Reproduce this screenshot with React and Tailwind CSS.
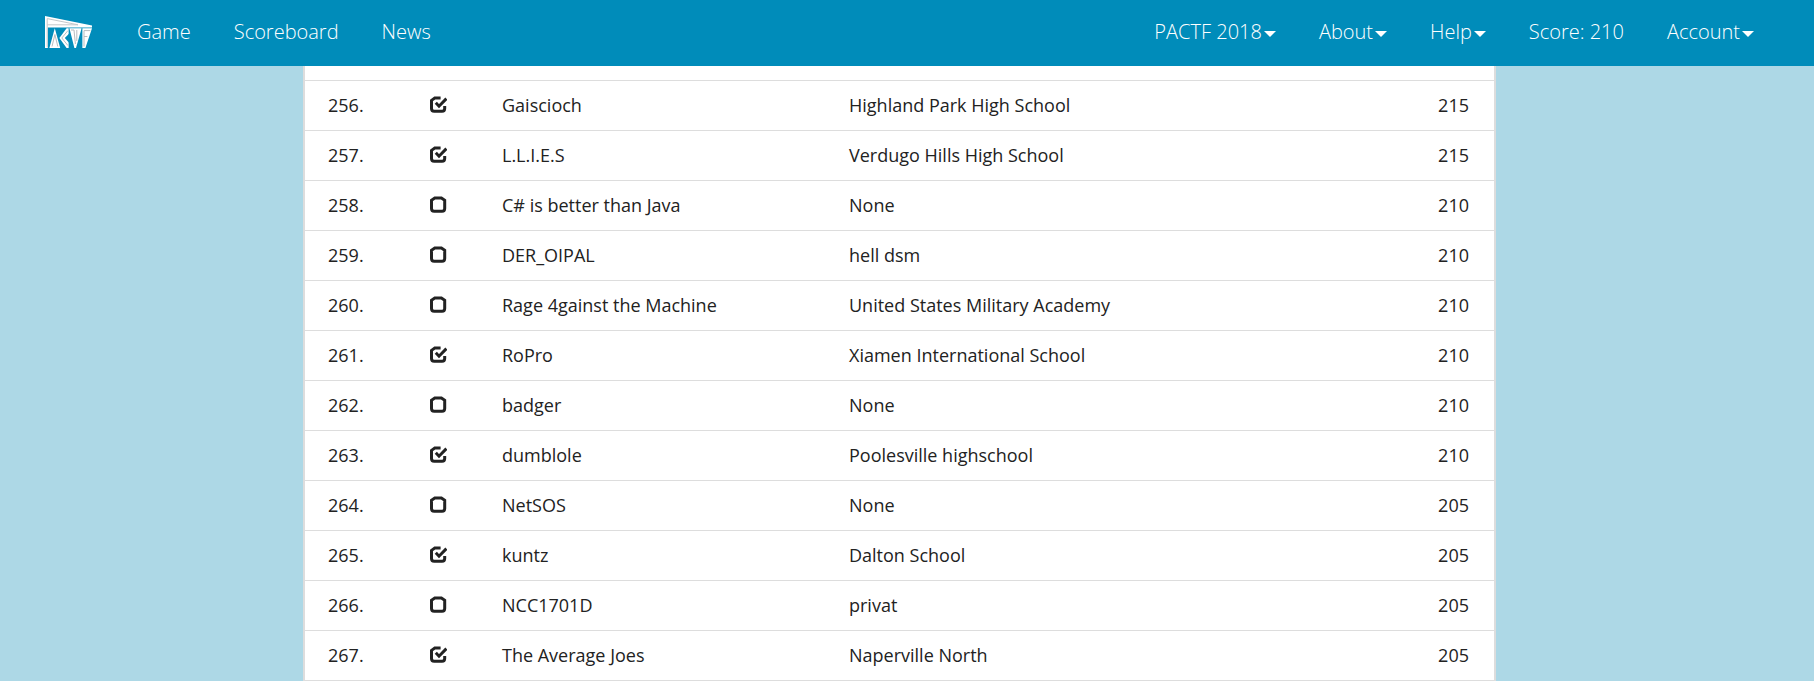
const teams = [
  [256, true, 'Gaiscioch', 'Highland Park High School', 215],
  [257, true, 'L.L.I.E.S', 'Verdugo Hills High School', 215],
  [258, false, 'C# is better than Java', 'None', 210],
  [259, false, 'DER_OIPAL', 'hell dsm', 210],
  [260, false, 'Rage 4gainst the Machine', 'United States Military Academy', 210],
  [261, true, 'RoPro', 'Xiamen International School', 210],
  [262, false, 'badger', 'None', 210],
  [263, true, 'dumblole', 'Poolesville highschool', 210],
  [264, false, 'NetSOS', 'None', 205],
  [265, true, 'kuntz', 'Dalton School', 205],
  [266, false, 'NCC1701D', 'privat', 205],
  [267, true, 'The Average Joes', 'Naperville North', 205],
];

function Logo() {
  return (
    <svg width="48" height="32" viewBox="0 0 48 32" aria-hidden="true">
      <path d="M0 0 L47 9.4 V11.6 H2.8 V32 H0 Z" fill="#fff" />
      <path d="M2.2 2.6 L33 8.8 H2.2 M2.2 2.6 V31" fill="none" stroke="#c4c8ca" strokeWidth="1" />
      <path d="M9.8 12.2 L15.2 32 H4.4 Z" fill="#fff" />
      <path d="M21.6 12.2 H23.6 V32 H21.6 L14.4 22 Z" fill="#fff" />
      <path d="M24.4 12.2 H36.6 L31 32 H29.4 Z" fill="#fff" />
      <path d="M37.4 12.2 H47 L40.4 32 H37.4 Z" fill="#fff" />
      <path d="M24.2 17.5 L19.8 22 L24.2 27 Z" fill="#008cba" />
      <path
        d="M7 30.5 L9.9 18.5 L12.8 30.5 M23 14.5 L16.8 22 L23 29.6 M26 14 H29 L30.4 28 M31.8 14 V25 M39 30.5 V14.6 H45.4 M39 20.5 H42.4"
        fill="none"
        stroke="#b9bdc0"
        strokeWidth="1"
      />
    </svg>
  );
}

function StatusIcon({ checked }) {
  return (
    <svg
      className="block"
      width="18"
      height="18"
      viewBox="0 0 18 18"
      role="img"
      aria-label={checked ? 'Eligible' : 'Not eligible'}
      fill="none"
      stroke="#222"
    >
      {checked ? (
        <>
          <path d="M11.6 2 H5.8 L2.5 4.4 V12.6 Q2.5 15.3 5.2 15.3 H13 Q15.7 15.3 15.7 12.6 V10" strokeWidth="3" />
          <path d="M6.8 6.8 L10 10.2 L17.4 2.6" strokeWidth="3" />
        </>
      ) : (
        <path
          d="M5.8 2 H12.4 L15.7 4.2 V12.6 Q15.7 15.3 13 15.3 H5.2 Q2.5 15.3 2.5 12.6 V4.2 Z"
          strokeWidth="3"
        />
      )}
    </svg>
  );
}

function NavLink({ children }) {
  return (
    <a href="#" className="hover:underline">
      {children}
    </a>
  );
}

function NavMenu({ children }) {
  return (
    <button type="button" className="flex items-center gap-[2px]">
      {children}
      <svg width="12" height="6" viewBox="0 0 12 6" className="mt-1" aria-hidden="true">
        <path d="M0 0 H12 L6 6 Z" fill="#fff" />
      </svg>
    </button>
  );
}

export default function App() {
  return (
    <div className="min-h-screen bg-[#add8e6] font-['Open_Sans',sans-serif] text-[#222]">
      <nav className="flex h-[66px] items-center justify-between bg-[#008cba] pr-[60px] pb-[2px] pl-[45px] text-xl font-light text-white">
        <div className="flex items-center gap-[44px]">
          <a href="#" aria-label="PACTF home">
            <Logo />
          </a>
          <div className="flex items-center gap-[43px]">
            <NavLink>Game</NavLink>
            <NavLink>Scoreboard</NavLink>
            <NavLink>News</NavLink>
          </div>
        </div>
        <div className="flex items-center gap-[43px]">
          <NavMenu>PACTF 2018</NavMenu>
          <NavMenu>About</NavMenu>
          <NavMenu>Help</NavMenu>
          <NavLink>Score: 210</NavLink>
          <NavMenu>Account</NavMenu>
        </div>
      </nav>
      <main className="pr-[15px]">
        <div className="mx-auto max-w-[1193px] border-x-2 border-[#ddd] bg-white pt-[14px]">
          <table className="w-full table-fixed border-collapse border-b border-[#ddd] text-left text-lg">
            <colgroup>
              <col className="w-[101px]" />
              <col className="w-[72px]" />
              <col className="w-[347px]" />
              <col />
              <col className="w-[120px]" />
            </colgroup>
            <tbody>
              {teams.map(([rank, checked, name, school, score]) => (
                <tr key={rank} className="h-[50px] border-t border-[#ddd]">
                  <td className="pb-[2px] pl-[23px]">{rank}.</td>
                  <td className="pb-[2px] pl-[23px]">
                    <StatusIcon checked={checked} />
                  </td>
                  <td className="px-6 pb-[2px]">{name}</td>
                  <td className="px-6 pb-[2px]">{school}</td>
                  <td className="pr-[25px] pb-[2px] text-right">{score}</td>
                </tr>
              ))}
            </tbody>
          </table>
        </div>
      </main>
    </div>
  );
}
